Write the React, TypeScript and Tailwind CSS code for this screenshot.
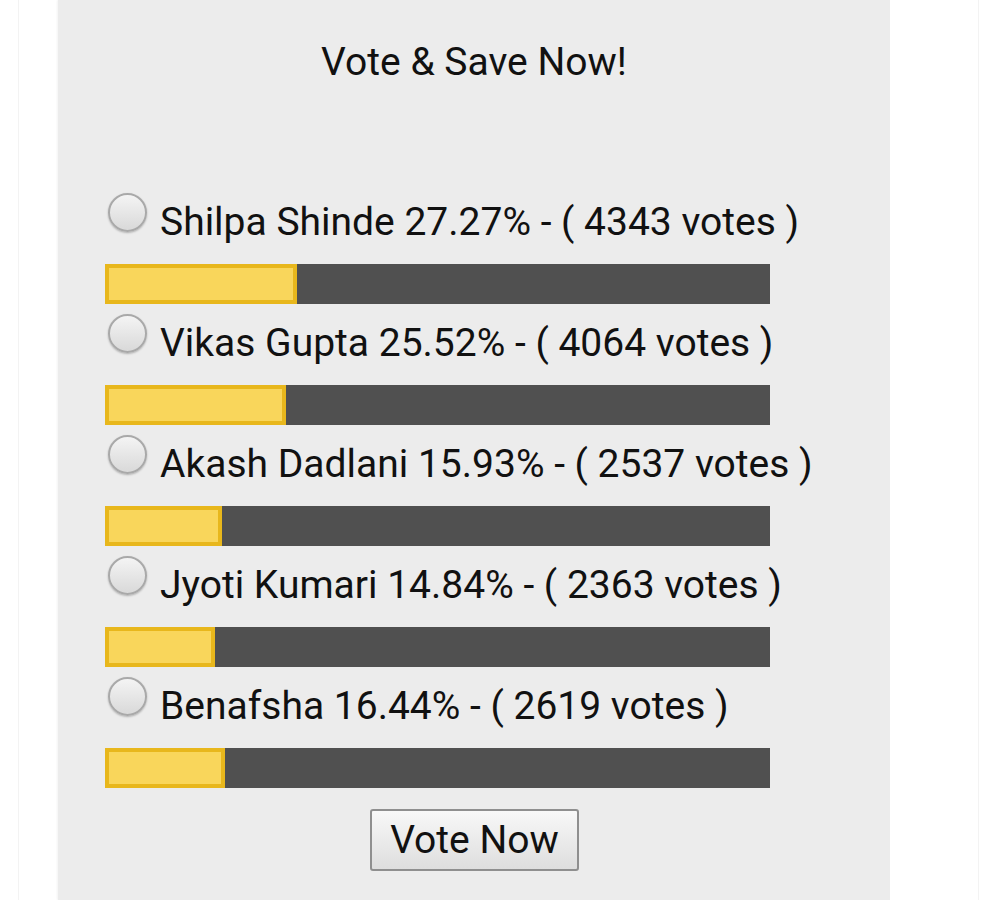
const candidates = [
  { name: 'Shilpa Shinde', pct: 27.27, votes: 4343 },
  { name: 'Vikas Gupta', pct: 25.52, votes: 4064 },
  { name: 'Akash Dadlani', pct: 15.93, votes: 2537 },
  { name: 'Jyoti Kumari', pct: 14.84, votes: 2363 },
  { name: 'Benafsha', pct: 16.44, votes: 2619 },
]

const BAR_WIDTH = 665

function PollOption({
  name,
  pct,
  votes,
}: {
  name: string
  pct: number
  votes: number
}) {
  const fill = Math.round((pct / 100) * BAR_WIDTH) + 11
  return (
    <div className="flex flex-col">
      <label className="flex h-[56px] items-start">
        <span className="ml-[3px] mt-[-1px] block h-[39px] w-[39px] shrink-0 rounded-full border-2 border-[#a9a9a9] bg-gradient-to-b from-[#f4f4f4] to-[#d9d9d9] shadow-[0_1px_2px_rgba(0,0,0,0.25)]" />
        <span className="ml-[13px] whitespace-nowrap text-[39px] leading-[56px] text-[#111]">
          {name} {pct.toFixed(2)}% - ( {votes} votes )
        </span>
      </label>
      <div className="mt-[14px] flex h-[40px] w-[665px] bg-[#505050]">
        <div
          className="h-full border-[4px] border-[#e8b71c] bg-[#f9d65b]"
          style={{ width: fill }}
        />
      </div>
    </div>
  )
}

export default function App() {
  return (
    <div className="flex min-h-[900px] w-[1000px] bg-white font-['Roboto',sans-serif]">
      <div className="ml-[18px] w-[40px] border-l border-[#f3f3f3]" />
      <main className="flex w-[832px] flex-col bg-[#ececec] pl-[47px] shadow-[-1px_0_2px_rgba(0,0,0,0.05)]">
        <h2 className="mt-[38px] h-[48px] pr-[47px] text-center text-[39px] leading-[48px] text-[#111]">
          Vote &amp; Save Now!
        </h2>
        <div className="mt-[108px] flex flex-col gap-[11px]">
          {candidates.map((c) => (
            <PollOption key={c.name} {...c} />
          ))}
        </div>
        <div className="mt-[21px] flex pl-[265px]">
          <button className="h-[62px] w-[209px] rounded-[3px] border-2 border-[#8f8f8f] bg-gradient-to-b from-[#f8f8f8] to-[#dedede] text-[39px] text-[#111]">
            Vote Now
          </button>
        </div>
      </main>
      <div className="ml-[88px] w-[22px] border-l border-[#f3f3f3]" />
    </div>
  )
}
